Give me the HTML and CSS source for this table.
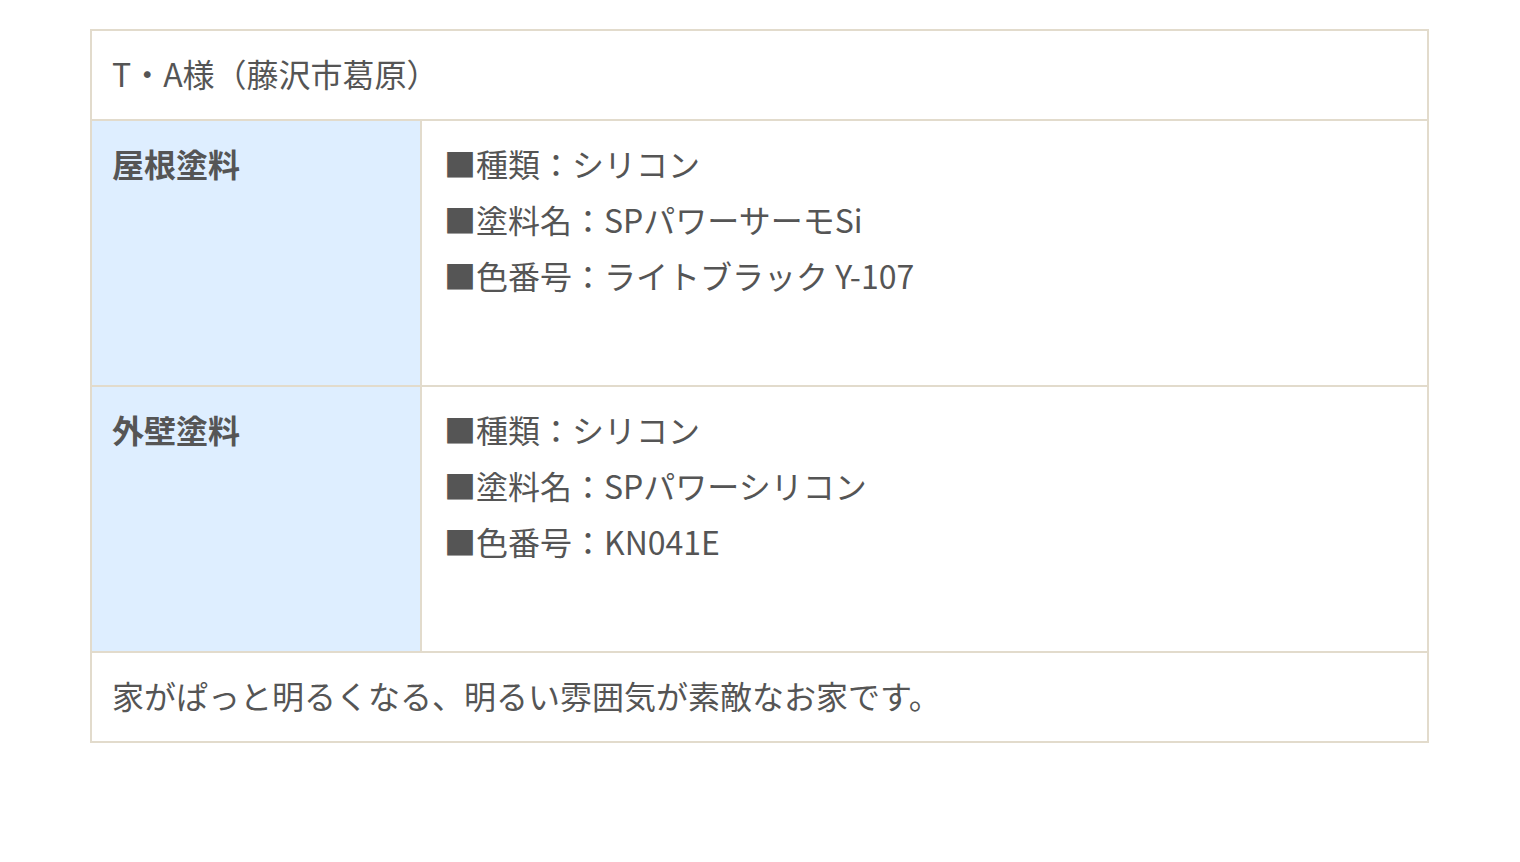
FILE: index.html
```html
<!DOCTYPE html>
<html lang="ja">
<head>
<meta charset="utf-8">
<title>施工事例</title>
<link rel="stylesheet" href="styles.css">
</head>
<body>
<div class="spec">
  <div class="spec-head">T・A様（藤沢市葛原）</div>
  <div class="spec-row">
    <div class="spec-label">屋根塗料</div>
    <div class="spec-body">
      <div>■種類：シリコン</div>
      <div>■塗料名：SPパワーサーモSi</div>
      <div>■色番号：ライトブラック Y-107</div>
    </div>
  </div>
  <div class="spec-row">
    <div class="spec-label">外壁塗料</div>
    <div class="spec-body">
      <div>■種類：シリコン</div>
      <div>■塗料名：SPパワーシリコン</div>
      <div>■色番号：KN041E</div>
    </div>
  </div>
  <div class="spec-foot">家がぱっと明るくなる、明るい雰囲気が素敵なお家です。</div>
</div>
</body>
</html>
```
FILE: styles.css
```css
html, body {
  margin: 0;
  padding: 0;
  background: #ffffff;
}
body {
  font-family: "Noto Sans CJK JP", "Noto Sans", sans-serif;
  font-size: 32px;
  line-height: 56px;
  color: #555555;
  font-feature-settings: "pkna";
}
.spec {
  margin: 29px 91px 0 90px;
  border: 2px solid #e2dbcc;
}
.spec-head,
.spec-foot {
  padding: 14px 20px 18px;
}
.spec-row {
  display: grid;
  grid-template-columns: 330px 1fr;
  border-top: 2px solid #e2dbcc;
}
.spec-foot {
  border-top: 2px solid #e2dbcc;
}
.spec-label {
  background: #deeeff;
  border-right: 2px solid #e2dbcc;
  padding: 14px 20px;
  font-weight: bold;
}
.spec-body {
  padding: 14px 22px 82px;
  height: 168px;
}
```
